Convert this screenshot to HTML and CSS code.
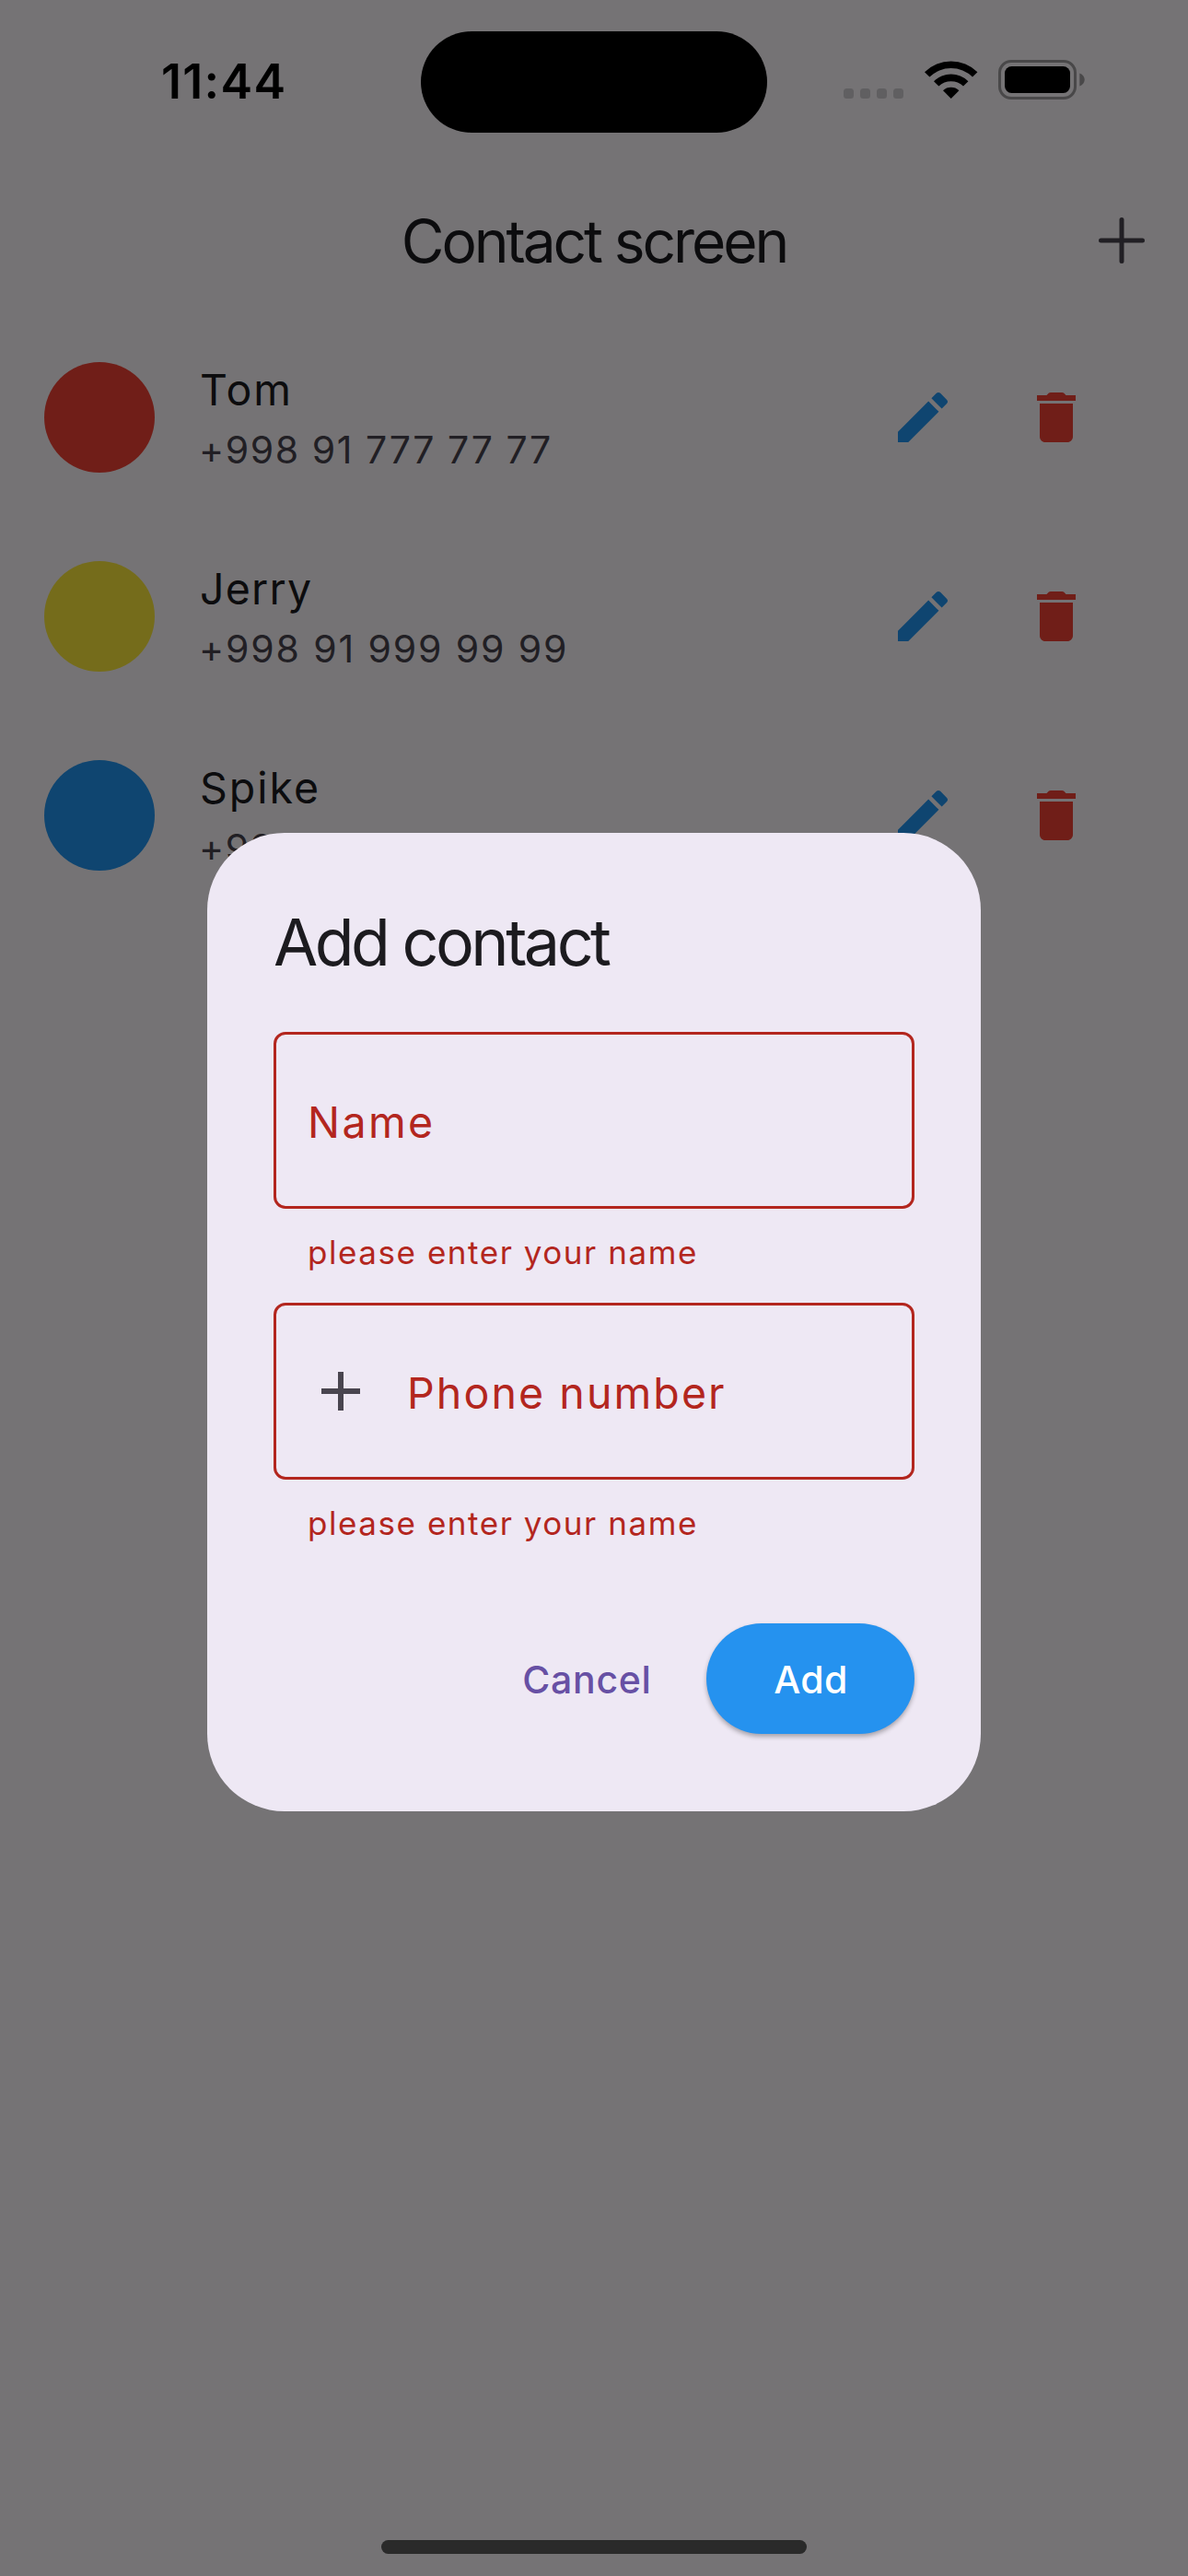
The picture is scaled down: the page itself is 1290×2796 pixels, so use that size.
FILE: index.html
```
<!DOCTYPE html>
<html lang="en">
<head>
<meta charset="utf-8">
<title>Contact screen</title>
<link rel="stylesheet" href="styles.css">
</head>
<body>
<svg width="0" height="0" class="sprite" aria-hidden="true">
  <symbol id="edit" viewBox="0 0 24 24"><path d="M3 17.25V21h3.75L17.81 9.94l-3.75-3.75L3 17.25zM20.71 7.04c.39-.39.39-1.02 0-1.41l-2.34-2.34c-.39-.39-1.02-.39-1.41 0l-1.83 1.83 3.75 3.75 1.83-1.83z"/></symbol>
  <symbol id="delete" viewBox="0 0 24 24"><path d="M6 19c0 1.100.9 2 2 2h8c1.100 0 2-.9 2-2V7H6v12zM19 4h-3.500l-.71-.71c-.18-.18-.44-.29-.7-.29H9.910c-.26 0-.52.11-.7.29L8.500 4H5v2h14V4z"/></symbol>
</svg>
<div class="screen">
  <header class="status">
    <div class="status__time">11:44</div>
    <div class="status__island"></div>
    <div class="status__icons">
      <div class="cell"><i></i><i></i><i></i><i></i></div>
      <svg class="wifi" viewBox="0 0 58 42">
        <path d="M0 13.200a41 41 0 0 1 57.400 0L52 18.600a33.200 33.200 0 0 0-46.600 0z"/>
        <path d="M10 23.200a26.800 26.800 0 0 1 37.400 0L42 28.600a19 19 0 0 0-26.600 0z"/>
        <path d="M20 33.200a12.800 12.800 0 0 1 17.400 0L28.700 42z"/>
      </svg>
      <svg class="battery" viewBox="0 0 95 43">
        <rect x="1.500" y="1.500" width="82" height="40" rx="12.500" fill="none" stroke="#494849" stroke-width="3"/>
        <rect x="7" y="7" width="71" height="29" rx="7.500"/>
        <path d="M88.300 14.500c7.200 3 7.200 11 0 14z" fill="#494849"/>
      </svg>
    </div>
  </header>

  <div class="appbar">
    <h1 class="appbar__title">Contact screen</h1>
    <svg class="appbar__add" viewBox="0 0 50 50"><path d="M25 2.500v45M2.500 25h45"/></svg>
  </div>

  <ul class="contacts">
    <li class="contact contact--red">
      <span class="contact__avatar"></span>
      <div class="contact__text"><span class="contact__name">Tom</span><span class="contact__phone">+998 91 777 77 77</span></div>
      <svg class="contact__edit"><use href="#edit"/></svg>
      <svg class="contact__delete"><use href="#delete"/></svg>
    </li>
    <li class="contact contact--yellow">
      <span class="contact__avatar"></span>
      <div class="contact__text"><span class="contact__name">Jerry</span><span class="contact__phone">+998 91 999 99 99</span></div>
      <svg class="contact__edit"><use href="#edit"/></svg>
      <svg class="contact__delete"><use href="#delete"/></svg>
    </li>
    <li class="contact contact--blue">
      <span class="contact__avatar"></span>
      <div class="contact__text"><span class="contact__name">Spike</span><span class="contact__phone">+99</span></div>
      <svg class="contact__edit"><use href="#edit"/></svg>
      <svg class="contact__delete"><use href="#delete"/></svg>
    </li>
  </ul>

  <div class="scrim">
    <section class="dialog">
      <h2 class="dialog__title">Add contact</h2>
      <div class="field field--name"><span class="field__label">Name</span></div>
      <p class="error">please enter your name</p>
      <div class="field field--phone">
        <svg class="field__icon" viewBox="0 0 24 24"><path d="M19 13h-6v6h-2v-6H5v-2h6V5h2v6h6v2z"/></svg>
        <span class="field__label">Phone number</span>
      </div>
      <p class="error">please enter your name</p>
      <div class="dialog__actions">
        <button class="btn btn--text">Cancel</button>
        <button class="btn btn--filled">Add</button>
      </div>
    </section>
  </div>
  <div class="home"></div>
</div>
</body>
</html>
```
FILE: styles.css
```
* { box-sizing: border-box; margin: 0; padding: 0; }

body {
  width: 1290px;
  height: 2796px;
  overflow: hidden;
  background: #fffbfe;
  font-family: Inter, "Liberation Sans", sans-serif;
}

.sprite { position: absolute; }

.screen {
  position: relative;
  display: flex;
  flex-direction: column;
  height: 2796px;
}

/* Status bar */
.status {
  position: relative;
  z-index: 2;
  display: grid;
  grid-template-columns: 457px 376px 1fr;
  height: 177px;
  padding-top: 33.5px;
}
.status__time {
  padding-left: 175px;
  font-size: 52px;
  font-weight: 600;
  line-height: 109px;
  letter-spacing: 1.3px;
}
.status__island { height: 110.5px; border-radius: 56px; background: #000; }
.status__icons { display: flex; height: 75px; padding: 31.5px 0 0 83px; }
.cell { display: flex; gap: 7px; margin-top: 31px; height: 11px; }
.cell i { width: 11px; border-radius: 3.5px; background: #605f61; }
.wifi { width: 58px; height: 42px; margin-left: 23px; }
.battery { width: 95px; height: 43px; margin-left: 22px; }

/* App bar */
.appbar {
  display: grid;
  grid-template-columns: 1fr auto 1fr;
  align-items: center;
  height: 168px;
}
.appbar__title {
  grid-column: 2;
  font-size: 64px;
  font-weight: 400;
  letter-spacing: -3.06px;
  color: #1c1b1f;
}
.appbar__add {
  width: 50px;
  height: 50px;
  justify-self: end;
  margin-right: 47px;
  fill: none;
  stroke: #49454f;
  stroke-width: 5;
  stroke-linecap: round;
}

/* Contact list */
.contacts { list-style: none; }
.contact { display: flex; align-items: center; height: 216px; padding: 0 107px 0 48px; }
.contact__avatar { width: 120px; height: 120px; border-radius: 50%; }
.contact__text { display: flex; flex-direction: column; flex: 1; padding-left: 49px; }
.contact__name { font-size: 46.5px; line-height: 71px; letter-spacing: 2px; color: #1c1b1f; }
.contact__phone { margin: -1px 0 1px -1px; font-size: 41px; line-height: 60px; letter-spacing: 1.57px; color: #49454f; }
.contact--red .contact__avatar { background: #f44336; }
.contact--yellow .contact__avatar { background: #ffeb3b; }
.contact--yellow .contact__name { letter-spacing: 1.2px; }
.contact--yellow .contact__phone { letter-spacing: 1.87px; }
.contact--blue .contact__avatar { background: #2196f3; }
.contact__edit, .contact__delete { width: 72px; height: 72px; }
.contact__edit { margin-right: 73px; fill: #2196f3; }
.contact__delete { fill: #f44336; }

/* Dialog */
.scrim {
  position: absolute;
  inset: 0;
  display: flex;
  justify-content: center;
  align-items: flex-start;
  padding-top: 904.4px;
  background: rgba(0, 0, 0, .541);
}
.dialog {
  display: flex;
  flex-direction: column;
  width: 840px;
  height: 1062px;
  padding: 71px 72px;
  border-radius: 84px;
  background: #eee8f4;
}
.dialog__title {
  margin-bottom: 49px;
  font-size: 70px;
  font-weight: 400;
  line-height: 96px;
  letter-spacing: -3.55px;
  color: #1c1b1f;
}
.field {
  display: flex;
  align-items: center;
  height: 192px;
  border: 3px solid #b3261e;
  border-radius: 13px;
}
.field__label { padding-top: 3px; font-size: 46.5px; color: #b3261e; }
.field--name { padding-left: 34px; }
.field--name .field__label { letter-spacing: 2.4px; }
.field--phone { padding-left: 34px; }
.field--phone .field__label { margin-left: 36px; letter-spacing: 2.1px; }
.field__icon { width: 72px; height: 72px; fill: #49454f; }
.error {
  margin: 23px 0 31px;
  padding-left: 37px;
  font-size: 35px;
  line-height: 48px;
  letter-spacing: 1.55px;
  color: #b3261e;
}
.dialog__actions { display: flex; justify-content: flex-end; margin-top: 53.5px; }
.btn {
  height: 120px;
  padding-top: 2px;
  border: 0;
  border-radius: 60px;
  background: none;
  font: 500 41px Inter, "Liberation Sans", sans-serif;
}
.btn--text { width: 208px; margin-right: 26px; padding-left: 1px; letter-spacing: .7px; color: #6750a4; }
.btn--filled {
  width: 226px;
  padding-left: 1px;
  letter-spacing: .4px;
  color: #fff;
  background: #2592ef;
  box-shadow: 0 3px 5px rgba(0, 0, 0, .3);
}

.home {
  position: relative;
  width: 462px;
  height: 15px;
  margin: auto auto 24px;
  border-radius: 8px;
  background: #2a2a2a;
}
```
